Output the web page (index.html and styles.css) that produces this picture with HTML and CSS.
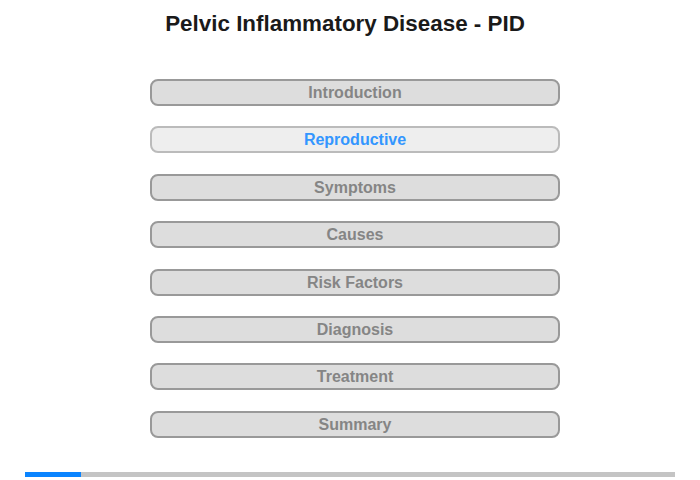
FILE: index.html
```html
<!DOCTYPE html>
<html lang="en">
<head>
  <meta charset="UTF-8" />
  <title>Pelvic Inflammatory Disease - PID</title>
  <link rel="stylesheet" href="styles.css">
</head>
<body>

<h1 class="title">Pelvic Inflammatory Disease - PID</h1>

<nav class="menu">
  <a class="menu-item">Introduction</a>
  <a class="menu-item active">Reproductive</a>
  <a class="menu-item">Symptoms</a>
  <a class="menu-item">Causes</a>
  <a class="menu-item">Risk Factors</a>
  <a class="menu-item">Diagnosis</a>
  <a class="menu-item">Treatment</a>
  <a class="menu-item">Summary</a>
</nav>

<div class="progress">
  <div class="progress-fill" style="width: 8.6%"></div>
</div>

</body>
</html>
```
FILE: styles.css
```css
body {
  margin: 0;
  font-family: 'Liberation Sans', Arial, sans-serif;
  background: #fff;
}
.title {
  margin: 0;
  padding: 11px 0 0 0;
  width: 690px;
  text-align: center;
  font-size: 22.4px;
  font-weight: bold;
  color: #1a1a1a;
  line-height: 26px;
}
.menu {
  display: flex;
  flex-direction: column;
  gap: 20.4px;
  width: 410px;
  margin: 42px 0 0 150px;
}
.menu-item {
  display: block;
  box-sizing: border-box;
  height: 27px;
  line-height: 23px;
  border: 2px solid #999;
  border-radius: 8px;
  background: #ddd;
  color: #858585;
  text-align: center;
  font-size: 16px;
  font-weight: bold;
  cursor: pointer;
}
.menu-item.active {
  background: #eee;
  border-color: #bbb;
  color: #3396ff;
}
.progress {
  margin: 34px 0 0 25px;
  width: 650px;
  height: 5px;
  background: #c4c4c4;
}
.progress-fill {
  height: 100%;
  background: #0a84ff;
}
```
